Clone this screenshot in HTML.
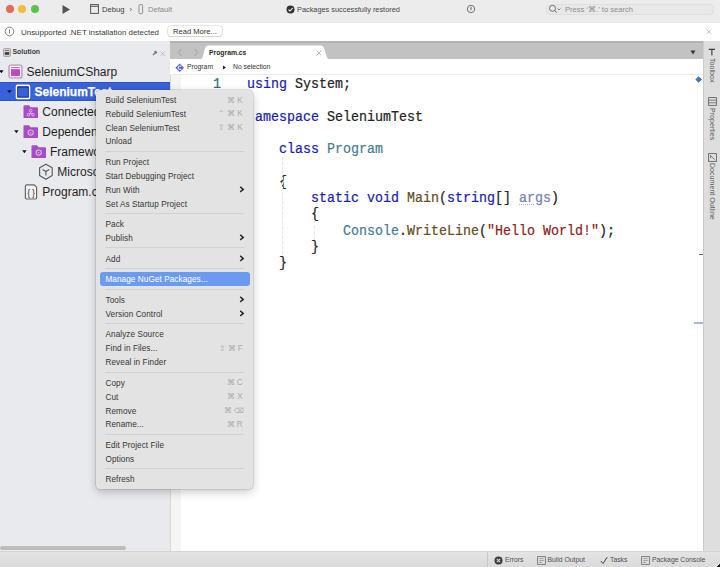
<!DOCTYPE html>
<html><head><meta charset="utf-8">
<style>
*{margin:0;padding:0;box-sizing:border-box}
html,body{width:720px;height:567px;overflow:hidden;background:#fff;font-family:"Liberation Sans",sans-serif;}
.a{position:absolute}
.t{position:absolute;white-space:nowrap;line-height:1}
#toolbar{left:0;top:0;width:720px;height:22px;background:#ececec}
#notif{left:0;top:22px;width:720px;height:19px;background:#fff;border-top:1px solid #e8e8e8}
#pad{left:0;top:41px;width:170px;height:510px;background:#e9eaee}
#tabbar{left:170px;top:41px;width:533px;height:18px;background:#c2c2c2;border-top:2px solid #b3b3b3}
#crumb{left:170px;top:59px;width:533px;height:16px;background:#fff;border-bottom:1px solid #ececec}
#gutter{left:170px;top:75px;width:11px;height:476px;background:#f5f5f5;border-left:1px solid #d8d8d8}
#side{left:703px;top:41px;width:17px;height:510px;background:#dedede;border-left:1px solid #cccccc}
#status{left:0;top:551px;width:720px;height:16px;background:linear-gradient(#e4e4e4,#dadada);border-top:1px solid #d4d4d4}
.codeblk{font-family:"Liberation Mono",monospace;font-size:13.33px;line-height:14.6px;white-space:pre;color:#222;-webkit-text-stroke:0.2px currentColor;transform:scaleY(1.12);transform-origin:0 0}
.br{position:relative;top:-1px}
.kw{color:#1c1ca8}
.ty{color:#4a7b93}
.fn{color:#644c22}
.st{color:#881f1f}
.pa{color:#7380b0}
#menu{left:96.4px;top:89.8px;width:156.9px;height:399px;background:#e3e3e3;border-radius:4px;box-shadow:0 0 0 0.5px rgba(0,0,0,.18),0 3px 10px rgba(0,0,0,.22)}
.mi{position:absolute;left:9.1px;font-size:8.2px;letter-spacing:0.07px;color:#363636;white-space:nowrap;line-height:1}
.sc{position:absolute;right:8.5px;font-size:8.2px;letter-spacing:2px;color:#ababab;white-space:nowrap;line-height:1}
.sep{position:absolute;left:8.6px;width:139px;height:1px;background:#d2d2d2}
.chev{position:absolute;left:142.6px}
.tree{position:absolute;font-size:12px;color:#1e1e1e;white-space:nowrap;line-height:1}
.tri{position:absolute;width:0;height:0;border-left:2.1px solid transparent;border-right:2.1px solid transparent;border-top:2.8px solid #111}
.folder{position:absolute;width:15px;height:13px}
</style></head><body>

<!-- toolbar -->
<div id="toolbar" class="a"></div>
<div class="a" style="left:6px;top:5px;width:8px;height:8px;border-radius:50%;background:#ec6559"></div>
<div class="a" style="left:18px;top:5px;width:8px;height:8px;border-radius:50%;background:#f2bd3b"></div>
<div class="a" style="left:31px;top:5px;width:8px;height:8px;border-radius:50%;background:#5cc24c"></div>
<svg class="a" style="left:61px;top:4px" width="10" height="11"><path d="M1.5 1 L9 5.5 L1.5 10 Z" fill="#555"/></svg>
<svg class="a" style="left:90px;top:4px" width="9" height="10"><rect x="0.6" y="0.6" width="7.8" height="8.8" fill="none" stroke="#555" stroke-width="1"/><line x1="0.6" y1="2.3" x2="8.4" y2="2.3" stroke="#555" stroke-width="1"/></svg>
<div class="t" style="left:102px;top:5.8px;font-size:7.6px;color:#3c3c3c">Debug</div>
<div class="t" style="left:129.5px;top:5.8px;font-size:7.6px;color:#555">›</div>
<svg class="a" style="left:137.5px;top:4px" width="6" height="11"><rect x="1" y="0.6" width="3.6" height="9" rx="0.8" fill="none" stroke="#888" stroke-width="0.9"/></svg>
<div class="t" style="left:148px;top:5.8px;font-size:7.6px;color:#8a8a8a">Default</div>
<svg class="a" style="left:286px;top:5px" width="9" height="9"><circle cx="4.5" cy="4.5" r="4" fill="#333"/><path d="M2.5 4.6 L4 6 L6.6 3" fill="none" stroke="#fff" stroke-width="1.1"/></svg>
<div class="t" style="left:297px;top:5.8px;font-size:7.35px;color:#444">Packages successfully restored</div>
<svg class="a" style="left:466px;top:3.7px" width="10" height="10"><circle cx="5" cy="5" r="3.7" fill="none" stroke="#666" stroke-width="0.9"/><path d="M4.3 3.3 L5.7 3.3 L5.2 6.4 L4.8 6.4 Z" fill="#555"/></svg>
<div class="a" style="left:546px;top:3.7px;width:168px;height:11.8px;border-radius:4px;background:#e8e8e8;border:1px solid #e0e0e0"></div>
<svg class="a" style="left:548px;top:4px" width="14" height="10"><circle cx="4.5" cy="4.3" r="3" fill="none" stroke="#666" stroke-width="0.9"/><line x1="6.6" y1="6.4" x2="8.6" y2="8.6" stroke="#666" stroke-width="1"/><path d="M9.5 4.5 L11 6 L12.5 4.5" fill="none" stroke="#666" stroke-width="0.8"/></svg>
<div class="t" style="left:565px;top:5.8px;font-size:7.6px;color:#8e8e8e">Press ‘⌘.’ to search</div>

<!-- notification -->
<div id="notif" class="a"></div>
<svg class="a" style="left:4px;top:26px" width="11" height="11"><circle cx="5.5" cy="5.5" r="4.3" fill="none" stroke="#777" stroke-width="0.9"/><line x1="5.5" y1="3.4" x2="5.5" y2="7.6" stroke="#777" stroke-width="0.9"/></svg>
<div class="t" style="left:21px;top:28.5px;font-size:7.95px;color:#3a3a3a">Unsupported .NET installation detected</div>
<div class="a" style="left:167.5px;top:26px;width:54.5px;height:10.3px;border-radius:3px;background:#fff;box-shadow:0 0 0 0.6px #d2d2d2,0 0.6px 1px rgba(0,0,0,.15)"></div>
<div class="t" style="left:173px;top:27.5px;font-size:7.6px;color:#333">Read More...</div>
<svg class="a" style="left:706px;top:29px" width="6" height="6"><path d="M0.8 0.8 L4.8 4.8 M4.8 0.8 L0.8 4.8" stroke="#b0b0b0" stroke-width="0.8"/></svg>

<!-- solution pad -->
<div id="pad" class="a"></div>
<svg class="a" style="left:3px;top:48px" width="8" height="9"><rect x="0.5" y="0.5" width="7" height="8" rx="1" fill="#d0d0d0" stroke="#999" stroke-width="0.8"/><rect x="1.8" y="4.2" width="4.4" height="2.5" fill="#333"/><line x1="1.8" y1="2.5" x2="6.2" y2="2.5" stroke="#666" stroke-width="0.8"/></svg>
<div class="t" style="left:12.5px;top:49px;font-size:6.9px;font-weight:bold;color:#3c3c3c">Solution</div>
<svg class="a" style="left:152px;top:50px" width="6" height="6"><path d="M1 5 L3 3 M2.5 1.5 L4.5 3.5 M3 1 L5 3" stroke="#777" stroke-width="1.3"/></svg>
<svg class="a" style="left:160px;top:50.5px" width="6" height="6"><path d="M0.5 0.5 L4.9 4.9 M4.9 0.5 L0.5 4.9" stroke="#b2b2b2" stroke-width="0.8"/></svg>

<!-- tree -->
<svg class="a" style="left:-1.1px;top:69.6px" width="6" height="5"><path d="M0.2 0.3 L4.6 0.3 L2.4 3.2 Z" fill="#111"/></svg>
<svg class="a" style="left:8px;top:64px" width="15" height="15"><rect x="1" y="1" width="13" height="13" rx="2" fill="#f5ebf7" stroke="#b77fc8" stroke-width="1.15"/><rect x="3.3" y="5.6" width="8.4" height="6.2" fill="#c443c6" stroke="#a63aa8" stroke-width="0.5"/><line x1="3.2" y1="3.6" x2="11.8" y2="3.6" stroke="#a070a8" stroke-width="0.9"/></svg>
<div class="tree" style="left:26.5px;top:66.0px">SeleniumCSharp</div>

<div class="a" style="left:0;top:81.6px;width:170px;height:19.2px;background:#3862d8;box-shadow:inset 0 1px 0 #2c52c4,inset 0 -1px 0 #2c52c4"></div>
<svg class="a" style="left:6.9px;top:89.8px" width="6" height="5"><path d="M0.2 0.3 L4.6 0.3 L2.4 3.2 Z" fill="#111"/></svg>
<svg class="a" style="left:15px;top:84px" width="16" height="16"><rect x="1.5" y="1.2" width="13" height="13.4" rx="1.2" fill="#3a5fd6" stroke="#fff" stroke-width="1.5"/><rect x="2.7" y="3.3" width="10.6" height="9.6" fill="#3a60d8" stroke="#1b2f8a" stroke-width="0.8"/></svg>
<div class="tree" style="left:34.5px;top:85.6px;font-weight:bold;color:#fff;-webkit-text-stroke:0.25px #fff">SeleniumTest</div>

<svg class="a" style="left:23px;top:105px" width="16" height="14"><path d="M0.5 1.2 Q0.5 0.3 1.4 0.3 L6 0.3 L7.6 2.2 L14.2 2.2 Q15 2.2 15 3 L15 12.6 Q15 13 14.5 13 L1 13 Q0.5 13 0.5 12.5 Z" fill="#a64dc6"/><circle cx="7.7" cy="5.6" r="1.3" fill="none" stroke="#e8c0f0" stroke-width="0.9"/><circle cx="5.5" cy="9.7" r="1.3" fill="none" stroke="#e8c0f0" stroke-width="0.9"/><circle cx="10" cy="9.7" r="1.3" fill="none" stroke="#e8c0f0" stroke-width="0.9"/><path d="M7.7 7 L7.7 8.3 L6.3 9 M7.7 8.3 L9.2 9" stroke="#e8c0f0" stroke-width="0.8" fill="none"/></svg>
<div class="tree" style="left:42.3px;top:106.3px">Connected Services</div>

<svg class="a" style="left:14.3px;top:129.8px" width="6" height="5"><path d="M0.2 0.3 L4.6 0.3 L2.4 3.2 Z" fill="#111"/></svg>
<svg class="a" style="left:23px;top:125px" width="16" height="14"><path d="M0.5 1.2 Q0.5 0.3 1.4 0.3 L6 0.3 L7.6 2.2 L14.2 2.2 Q15 2.2 15 3 L15 12.6 Q15 13 14.5 13 L1 13 Q0.5 13 0.5 12.5 Z" fill="#a64dc6"/><circle cx="7.7" cy="7.6" r="2.6" fill="none" stroke="#e2b4ee" stroke-width="1.1"/><circle cx="7.7" cy="7.8" r="0.7" fill="#e2b4ee"/></svg>
<div class="tree" style="left:42.3px;top:126.3px">Dependencies</div>

<svg class="a" style="left:21.9px;top:149.8px" width="6" height="5"><path d="M0.2 0.3 L4.6 0.3 L2.4 3.2 Z" fill="#111"/></svg>
<svg class="a" style="left:31px;top:145px" width="16" height="14"><path d="M0.5 1.2 Q0.5 0.3 1.4 0.3 L6 0.3 L7.6 2.2 L14.2 2.2 Q15 2.2 15 3 L15 12.6 Q15 13 14.5 13 L1 13 Q0.5 13 0.5 12.5 Z" fill="#a64dc6"/><circle cx="7.7" cy="7.6" r="2.6" fill="none" stroke="#e2b4ee" stroke-width="1.1"/><circle cx="7.7" cy="7.8" r="0.7" fill="#e2b4ee"/></svg>
<div class="tree" style="left:50px;top:146.3px">Frameworks</div>

<svg class="a" style="left:38px;top:163px" width="16" height="18"><path d="M7.9 1.2 L14.2 4.8 L14.2 12.6 L7.9 16.3 L1.6 12.6 L1.6 4.8 Z" fill="none" stroke="#5a5a5a" stroke-width="1.15" stroke-linejoin="round"/><path d="M4.6 6.6 L7.9 8.6 L11.2 6.6 M7.9 8.6 L7.9 12.6" fill="none" stroke="#5a5a5a" stroke-width="1.15"/></svg>
<div class="tree" style="left:57.3px;top:166.3px">Microsoft.NETCore.App</div>

<svg class="a" style="left:23.5px;top:183.8px" width="14" height="16"><path d="M1.4 2.2 Q1.4 0.8 2.8 0.8 L10.2 0.8 L12.6 3.2 L12.6 13.8 Q12.6 15 11.4 15 L2.6 15 Q1.4 15 1.4 13.8 Z" fill="#f3f3f5" stroke="#666" stroke-width="1.2"/><text x="3.2" y="11.8" font-family="Liberation Sans" font-size="8.8" fill="#333">{</text><text x="8" y="11.8" font-family="Liberation Sans" font-size="8.8" fill="#333">}</text></svg>
<div class="tree" style="left:42.3px;top:186.4px">Program.cs</div>

<div class="a" style="left:0;top:546px;width:126px;height:4px;border-radius:2px;background:#bdbdc0"></div>

<!-- editor -->
<div id="tabbar" class="a"></div>
<svg class="a" style="left:176px;top:48px" width="8" height="9"><path d="M5.5 1 L2.2 4.5 L5.5 8" fill="none" stroke="#9a9a9a" stroke-width="0.9"/></svg>
<svg class="a" style="left:192px;top:48px" width="8" height="9"><path d="M2.5 1 L5.8 4.5 L2.5 8" fill="none" stroke="#9a9a9a" stroke-width="0.9"/></svg>
<svg class="a" style="left:199px;top:45px" width="133" height="15"><path d="M0 14.5 Q3 14.5 4 11 L6 3 Q7 0.6 10 0.6 L121 0.6 Q124 0.6 125 3 L127.5 11 Q128.5 14.5 132 14.5 Z" fill="#fff"/></svg>
<div class="t" style="left:209px;top:50px;font-size:6.8px;font-weight:bold;color:#2a2a2a">Program.cs</div>
<svg class="a" style="left:316px;top:50px" width="6" height="6"><path d="M0.5 0.5 L5.5 5.5 M5.5 0.5 L0.5 5.5" stroke="#b5b5b5" stroke-width="0.9"/></svg>
<svg class="a" style="left:690px;top:50px" width="6" height="5"><path d="M0.5 0.5 L5.5 0.5 L3 4.5 Z" fill="#333"/></svg>

<div id="crumb" class="a"></div>
<svg class="a" style="left:174.5px;top:63px" width="10" height="10"><path d="M4.7 0.4 L9 4.7 L4.7 9 L0.4 4.7 Z" fill="#5563cc"/><path d="M6.2 3.6 A1.7 1.7 0 1 0 6.2 5.8" fill="none" stroke="#e6eaff" stroke-width="1.1"/></svg>
<div class="t" style="left:187px;top:64.2px;font-size:6.8px;color:#333">Program</div>
<svg class="a" style="left:222px;top:65px" width="5" height="5"><path d="M1 0.5 L4 2.5 L1 4.5 Z" fill="#222"/></svg>
<div class="t" style="left:233px;top:64.2px;font-size:6.8px;color:#333">No selection</div>

<div id="gutter" class="a"></div>
<svg class="a" style="left:695px;top:76px" width="7" height="7"><path d="M3.6 0.7 L6.5 3.5 L3.6 6.3 L0.7 3.5 Z" fill="#4278b4" stroke="#2d5d98" stroke-width="0.6"/></svg>
<div class="a" style="left:698.5px;top:253.8px;width:4.5px;height:1.2px;background:#666"></div>
<div class="a" style="left:697px;top:86px;width:1px;height:465px;background:#f7f7f7"></div>
<div class="a" style="left:694px;top:322.3px;width:9px;height:1.5px;background:#a6b6de"></div>

<div class="codeblk a" style="left:213px;top:77.4px;color:#2f6f78">1</div>
<div class="codeblk a" style="left:247px;top:77.4px"><span class="kw">using</span> System;

<span class="kw"> amespace</span> SeleniumTest

    <span class="kw">class</span> <span class="ty">Program</span>

    <span class="br">{</span>
        <span class="kw">static</span> <span class="kw">void</span> <span class="fn">Main</span>(<span class="kw">string</span>[] <span class="pa">args</span>)
        <span class="br">{</span>
            <span class="ty">Console</span>.<span class="fn">WriteLine</span>(<span class="st">"Hello World!"</span>);
        <span class="br">}</span>
    <span class="br">}</span>
</div>
<div class="a" style="left:282px;top:157px;width:0;height:97px;border-left:1px dashed #e6e6e6"></div>
<div class="a" style="left:314px;top:220px;width:0;height:20px;border-left:1px dashed #e6e6e6"></div>
<div class="a" style="left:519px;top:204.2px;width:14.5px;height:0;border-top:1px dotted #a9b0d4"></div>

<!-- side bar -->
<div id="side" class="a"></div>
<svg class="a" style="left:708px;top:48px" width="8" height="8"><path d="M0.8 1.4 L7 1.4 M3.9 1.4 L3.9 7.4" stroke="#3a3a3a" stroke-width="1.1" fill="none"/></svg>
<div class="t" style="left:715.2px;top:58px;font-size:7.1px;color:#5e5e5e;transform:rotate(90deg);transform-origin:0 0">Toolbox</div>
<svg class="a" style="left:707.5px;top:96.5px" width="9" height="9"><rect x="0.6" y="0.6" width="7.8" height="7.8" fill="none" stroke="#666" stroke-width="0.9"/><path d="M0.6 3.2 L8.4 3.2 M0.6 5.8 L8.4 5.8" stroke="#666" stroke-width="0.8"/></svg>
<div class="t" style="left:715.2px;top:107.5px;font-size:7.1px;color:#5e5e5e;transform:rotate(90deg);transform-origin:0 0">Properties</div>
<svg class="a" style="left:707.5px;top:152.5px" width="9" height="9"><rect x="0.6" y="0.6" width="7.8" height="7.8" fill="none" stroke="#666" stroke-width="0.9"/><path d="M2.5 2.5 L6.5 6.5 M2.5 2.5 L2.5 5" stroke="#666" stroke-width="0.8"/></svg>
<div class="t" style="left:715.2px;top:163px;font-size:7.1px;color:#5e5e5e;transform:rotate(90deg);transform-origin:0 0">Document Outline</div>

<!-- status bar -->
<div id="status" class="a"></div>
<div class="a" style="left:486.5px;top:552px;width:1px;height:15px;background:#c8c8c8"></div>
<svg class="a" style="left:494px;top:555.5px" width="9" height="9"><circle cx="4.5" cy="4.5" r="4" fill="#3a3a3a"/><path d="M2.8 2.8 L6.2 6.2 M6.2 2.8 L2.8 6.2" stroke="#ddd" stroke-width="1.1"/></svg>
<div class="t" style="left:505px;top:557.3px;font-size:6.8px;color:#505050">Errors</div>
<svg class="a" style="left:537px;top:555.5px" width="9" height="9"><rect x="0.6" y="0.6" width="7.8" height="7.8" fill="none" stroke="#777" stroke-width="0.9"/><path d="M2.3 2.6 L6.7 2.6 M2.3 4.5 L6.7 4.5 M2.3 6.4 L5 6.4" stroke="#888" stroke-width="0.7" fill="none"/></svg>
<div class="t" style="left:547.5px;top:557.3px;font-size:6.8px;color:#505050">Build Output</div>
<svg class="a" style="left:600px;top:555.5px" width="8" height="9"><path d="M0.8 5 L3 7.5 L7.2 1.2" stroke="#444" stroke-width="1" fill="none"/></svg>
<div class="t" style="left:610px;top:557.3px;font-size:6.8px;color:#505050">Tasks</div>
<svg class="a" style="left:641px;top:555.5px" width="9" height="9"><rect x="0.6" y="0.6" width="7.8" height="7.8" fill="none" stroke="#777" stroke-width="0.9"/><path d="M2.3 2.6 L6.7 2.6 M2.3 4.5 L6.7 4.5 M2.3 6.4 L5 6.4" stroke="#888" stroke-width="0.7" fill="none"/></svg>
<div class="t" style="left:652px;top:557.3px;font-size:6.8px;color:#505050">Package Console</div>
<svg class="a" style="left:714px;top:561px" width="6" height="6"><path d="M6 2.5 L6 6 L2.5 6 Z" fill="#1a1a1a"/><path d="M1 5.5 Q4 5 5.5 1.5" fill="none" stroke="#f2f2f2" stroke-width="0.8"/></svg>

<!-- context menu -->
<div id="menu" class="a">
<div class="mi" style="top:7.3px">Build SeleniumTest</div>
<div class="sc" style="top:6.8px">⌘K</div>
<div class="mi" style="top:21.1px">Rebuild SeleniumTest</div>
<div class="sc" style="top:20.6px">⌃⌘K</div>
<div class="mi" style="top:34.9px">Clean SeleniumTest</div>
<div class="sc" style="top:34.4px">⇧⌘K</div>
<div class="mi" style="top:48.7px">Unload</div>
<div class="sep" style="top:60.9px"></div>
<div class="mi" style="top:69.4px">Run Project</div>
<div class="mi" style="top:83.3px">Start Debugging Project</div>
<div class="mi" style="top:97.1px">Run With</div>
<svg class="chev" style="top:96.2px" width="6" height="7"><path d="M1.2 0.9 L4.3 3.4 L1.2 5.9" fill="none" stroke="#222" stroke-width="1.35"/></svg>
<div class="mi" style="top:110.9px">Set As Startup Project</div>
<div class="sep" style="top:123.0px"></div>
<div class="mi" style="top:131.6px">Pack</div>
<div class="mi" style="top:145.3px">Publish</div>
<svg class="chev" style="top:144.4px" width="6" height="7"><path d="M1.2 0.9 L4.3 3.4 L1.2 5.9" fill="none" stroke="#222" stroke-width="1.35"/></svg>
<div class="sep" style="top:157.5px"></div>
<div class="mi" style="top:165.9px">Add</div>
<svg class="chev" style="top:165.0px" width="6" height="7"><path d="M1.2 0.9 L4.3 3.4 L1.2 5.9" fill="none" stroke="#222" stroke-width="1.35"/></svg>
<div class="sep" style="top:178.1px"></div>
<div class="a" style="left:3.5px;top:182.4px;width:150.2px;height:13.5px;border-radius:3px;background:#6b9bf0"></div>
<div class="mi" style="top:186.3px;color:#fff">Manage NuGet Packages...</div>
<div class="sep" style="top:198.8px"></div>
<div class="mi" style="top:207.3px">Tools</div>
<svg class="chev" style="top:206.4px" width="6" height="7"><path d="M1.2 0.9 L4.3 3.4 L1.2 5.9" fill="none" stroke="#222" stroke-width="1.35"/></svg>
<div class="mi" style="top:221.1px">Version Control</div>
<svg class="chev" style="top:220.2px" width="6" height="7"><path d="M1.2 0.9 L4.3 3.4 L1.2 5.9" fill="none" stroke="#222" stroke-width="1.35"/></svg>
<div class="sep" style="top:233.5px"></div>
<div class="mi" style="top:241.7px">Analyze Source</div>
<div class="mi" style="top:255.6px">Find in Files...</div>
<div class="sc" style="top:255.1px">⇧⌘F</div>
<div class="mi" style="top:269.4px">Reveal in Finder</div>
<div class="sep" style="top:282.0px"></div>
<div class="mi" style="top:290.0px">Copy</div>
<div class="sc" style="top:289.5px">⌘C</div>
<div class="mi" style="top:303.8px">Cut</div>
<div class="sc" style="top:303.3px">⌘X</div>
<div class="mi" style="top:317.8px">Remove</div>
<div class="sc" style="top:317.3px">⌘<span style="font-size:6.8px;letter-spacing:1.2px">⌫</span></div>
<div class="mi" style="top:331.7px">Rename...</div>
<div class="sc" style="top:331.2px">⌘R</div>
<div class="sep" style="top:343.9px"></div>
<div class="mi" style="top:352.2px">Edit Project File</div>
<div class="mi" style="top:366.0px">Options</div>
<div class="sep" style="top:378.2px"></div>
<div class="mi" style="top:386.5px">Refresh</div>
</div>

</body></html>
